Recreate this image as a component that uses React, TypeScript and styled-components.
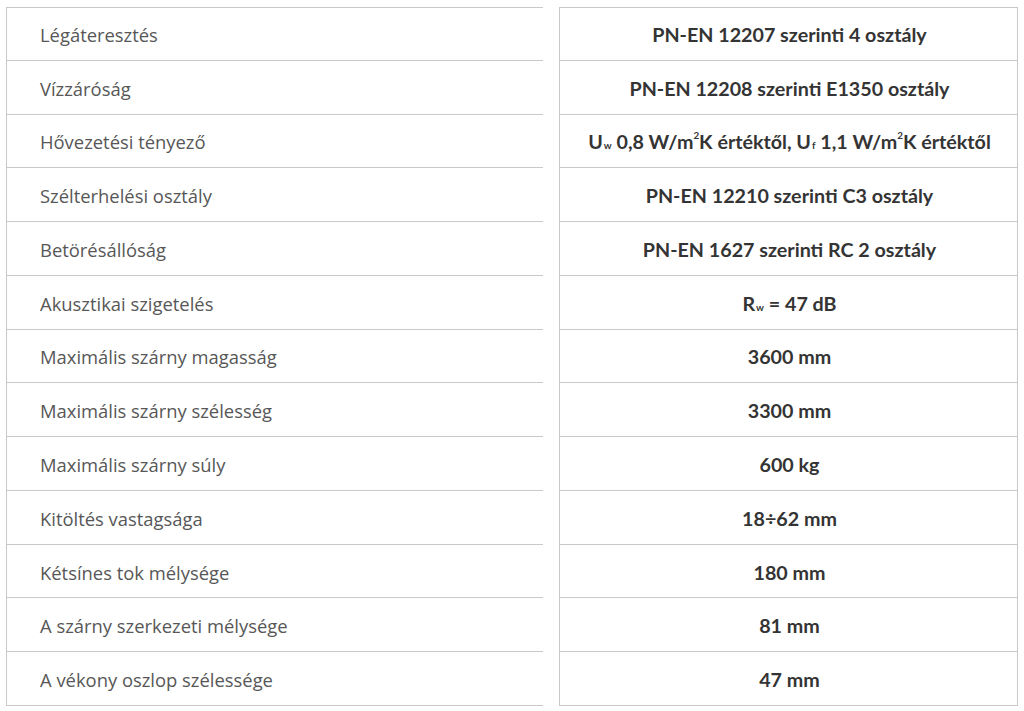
import React from "react";
import styled, { createGlobalStyle } from "styled-components";

const Global = createGlobalStyle`
  html, body { margin: 0; padding: 0; background: #ffffff; }
  body { font-family: "Open Sans", "Liberation Sans", sans-serif; }
`;

const Page = styled.div`
  width: 1024px;
  height: 711px;
  box-sizing: border-box;
  padding: 7px 0 0 6px;
  background: #fff;
`;

const Table = styled.div`
  display: grid;
  grid-template-columns: 537px 459px;
  grid-auto-rows: 53.77px;
  column-gap: 16px;
`;

const Cell = styled.div<{ $first?: boolean }>`
  box-sizing: border-box;
  display: flex;
  align-items: center;
  border-bottom: 1px solid #c9c9c9;
  border-left: 1px solid #c9c9c9;
  border-top: ${(p) => (p.$first ? "1px solid #c9c9c9" : "none")};
  padding-top: 2px;
  white-space: pre;
`;

const Label = styled(Cell)`
  padding-left: 33px;
  font-family: "Open Sans", "Liberation Sans", sans-serif;
  font-size: 18.4px;
  font-weight: 400;
  color: #575757;
`;

const Value = styled(Cell)`
  justify-content: center;
  border-right: 1px solid #c9c9c9;
  font-family: Lato, "Liberation Sans", sans-serif;
  font-size: 19.7px;
  font-weight: 700;
  color: #343434;
  padding-left: 2px;
`;

const Sub = styled.span`
  font-size: 0.5em;
  position: relative;
  top: 0.35em;
  margin-left: 1px;
`;

const Sup = styled.span`
  font-size: 0.5em;
  position: relative;
  top: -0.75em;
`;

const rows: [string, React.ReactNode][] = [
  ["Légáteresztés", "PN-EN 12207 szerinti 4 osztály"],
  ["Vízzáróság", "PN-EN 12208 szerinti E1350 osztály"],
  [
    "Hővezetési tényező",
    <>
      U<Sub>w</Sub>{" 0,8 W/m"}<Sup>2</Sup>{"K értéktől, U"}<Sub>f</Sub>{" 1,1 W/m"}<Sup>2</Sup>K értéktől
    </>,
  ],
  ["Szélterhelési osztály", "PN-EN 12210 szerinti C3 osztály"],
  ["Betörésállóság", "PN-EN 1627 szerinti RC 2 osztály"],
  [
    "Akusztikai szigetelés",
    <>
      R<Sub>w</Sub>{" = 47 dB"}
    </>,
  ],
  ["Maximális szárny magasság", "3600 mm"],
  ["Maximális szárny szélesség", "3300 mm"],
  ["Maximális szárny súly", "600 kg"],
  ["Kitöltés vastagsága", "18÷62 mm"],
  ["Kétsínes tok mélysége", "180 mm"],
  ["A szárny szerkezeti mélysége", "81 mm"],
  ["A vékony oszlop szélessége", "47 mm"],
];

export default function App() {
  return (
    <Page>
      <Global />
      <Table>
        {rows.map(([label, value], i) => (
          <React.Fragment key={i}>
            <Label $first={i === 0}>{label}</Label>
            <Value $first={i === 0}>{value}</Value>
          </React.Fragment>
        ))}
      </Table>
    </Page>
  );
}
